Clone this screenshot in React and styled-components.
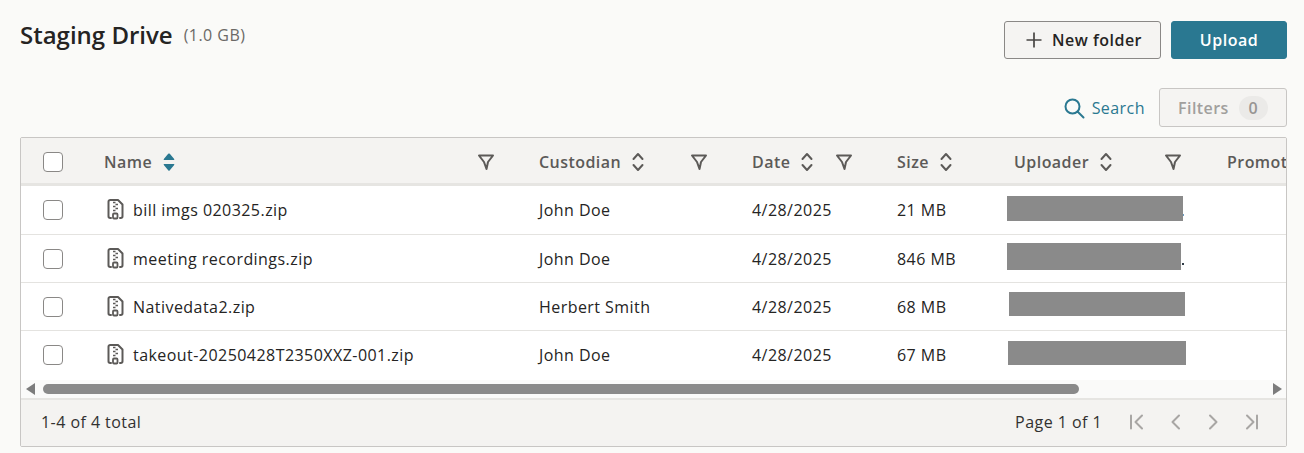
import React from "react";
import styled, { createGlobalStyle } from "styled-components";

const Global = createGlobalStyle`
  html, body { margin: 0; padding: 0; background: #fafaf8; }
  body { font-family: "Open Sans", "Liberation Sans", sans-serif; color: #252423; letter-spacing: 0.45px; }
  * { box-sizing: border-box; }
`;

const Page = styled.div`
  width: 1304px;
  height: 453px;
  padding: 21px 17px 0 20px;
  overflow: hidden;
`;

const TopBar = styled.header`
  display: flex;
  justify-content: space-between;
  align-items: flex-start;
  height: 38px;
`;

const TitleGroup = styled.div`
  display: flex;
  align-items: center;
  gap: 11px;
  margin-top: -3px;
`;

const Title = styled.h1`
  margin: 0;
  font-size: 24px;
  line-height: 34px;
  font-weight: 600;
  letter-spacing: 0;
  color: #252423;
`;

const Subtitle = styled.span`
  font-size: 16px;
  color: #6b6966;
`;

const Actions = styled.div`
  display: flex;
  gap: 10px;
`;

const Button = styled.button`
  height: 38px;
  border-radius: 3px;
  font: 600 16px "Open Sans", sans-serif;
  letter-spacing: 0.5px;
  display: flex;
  align-items: center;
  justify-content: center;
  gap: 9px;
  padding: 0 0 0 ${(p) => p.$pad || 0}px;
  width: ${(p) => p.$width}px;
  color: ${(p) => (p.$primary ? "#fff" : "#252423")};
  background: ${(p) => (p.$primary ? "#2a7891" : "#f5f4f2")};
  border: 1px solid ${(p) => (p.$primary ? "#2a7891" : "#8a8886")};
`;

const ToolRow = styled.div`
  display: flex;
  justify-content: flex-end;
  align-items: center;
  margin-top: 29px;
  height: 39px;
  gap: 14px;
`;

const SearchLink = styled.span`
  display: flex;
  align-items: center;
  gap: 7px;
  font-size: 16px;
  color: #2a7891;
`;

const FilterButton = styled.div`
  width: 128px;
  height: 39px;
  border: 1px solid #c8c6c4;
  border-radius: 3px;
  background: #f5f4f2;
  display: flex;
  align-items: center;
  padding-left: 18px;
  gap: 10px;
  font-size: 16px;
  font-weight: 600;
  color: #a19f9d;
`;

const CountBadge = styled.span`
  min-width: 29px;
  height: 24px;
  border-radius: 12px;
  background: #ebeae8;
  display: flex;
  align-items: center;
  justify-content: center;
  color: #979593;
`;

const TableCard = styled.section`
  margin-top: 10px;
  height: 310px;
  border: 1px solid #c8c6c4;
  border-radius: 2px;
  overflow: hidden;
  background: #fff;
  display: flex;
  flex-direction: column;
`;

const grid = "83px 435px 213px 145px 117px 213px 200px";

const HeaderRow = styled.div`
  display: grid;
  grid-template-columns: ${grid};
  height: 48px;
  flex: none;
  padding-top: 2px;
  background: #f4f3f1;
  border-bottom: 3px solid #e6e5e2;
  overflow: hidden;
`;

const Row = styled.div`
  display: grid;
  grid-template-columns: ${grid};
  height: ${(p) => p.$h}px;
  flex: none;
  align-items: center;
  border-bottom: ${(p) => (p.$last ? "none" : "1px solid #e4e3e0")};
  font-size: 16px;
  color: #252423;
`;

const CheckCell = styled.div`
  display: flex;
  align-items: center;
  padding-left: 22px;
`;

const Checkbox = styled.span`
  display: block;
  width: 20px;
  height: 20px;
  border: 1px solid #8a8886;
  border-radius: 4px;
  background: #fff;
`;

const HeadCell = styled.div`
  display: flex;
  align-items: center;
  font-size: 16px;
  font-weight: 600;
  color: #5c5a58;
  white-space: nowrap;
  min-width: 0;
`;

const SortSlot = styled.span`
  display: flex;
  margin-left: 11px;
`;

const FilterSlot = styled.span`
  display: flex;
  margin-left: auto;
  margin-right: ${(p) => p.$right}px;
`;

const NameCell = styled.div`
  display: flex;
  align-items: center;
  gap: 9px;
  padding-left: 3px;
`;

const Cell = styled.div`
  white-space: nowrap;
`;

const RedactCell = styled.div`
  display: flex;
  align-items: flex-end;
  margin-left: ${(p) => p.$x}px;
  margin-bottom: ${(p) => p.$y}px;
`;

const Redaction = styled.div`
  width: ${(p) => p.$w}px;
  height: ${(p) => p.$h}px;
  background: #8a8a8a;
`;

const Dot = styled.span`
  width: ${(p) => p.$w}px;
  height: 2px;
  margin-left: ${(p) => p.$gap}px;
  margin-bottom: 5px;
  background: ${(p) => p.$color};
`;

const ScrollBar = styled.div`
  height: 20px;
  flex: none;
  background: #fafaf9;
  display: flex;
  align-items: center;
  position: relative;
  margin-top: 1px;
  border-bottom: 2px solid #e6e5e2;
`;

const ScrollThumb = styled.div`
  width: 1036px;
  height: 10px;
  margin-left: 22px;
  border-radius: 5px;
  background: #8a8a8a;
`;

const ArrowLeft = styled.span`
  position: absolute;
  left: 5px;
  top: 3px;
  border-style: solid;
  border-width: 6px 9px 6px 0;
  border-color: transparent #7c7c7c transparent transparent;
`;

const ArrowRight = styled.span`
  position: absolute;
  right: 4px;
  top: 3px;
  border-style: solid;
  border-width: 6px 0 6px 9px;
  border-color: transparent transparent transparent #7c7c7c;
`;

const Footer = styled.footer`
  flex: 1;
  background: #f4f3f1;
  display: flex;
  align-items: center;
  padding: 0 25px 2px 20px;
  font-size: 16px;
  color: #323130;
`;

const PageLabel = styled.span`
  margin-left: auto;
  margin-right: 25px;
`;

const Pager = styled.div`
  display: flex;
  gap: 18px;
  color: #a8a6a4;
`;

const Icon = styled.svg`
  display: block;
  flex: none;
  fill: none;
  stroke: currentColor;
  stroke-linecap: round;
  stroke-linejoin: round;
`;

const Plus = () => (
  <Icon width="18" height="18" viewBox="0 0 18 18" strokeWidth="1.7" style={{ color: "#484644" }}>
    <path d="M9 1.5v15M1.5 9h15" strokeLinecap="butt" />
  </Icon>
);

const SearchIcon = () => (
  <Icon width="22" height="22" viewBox="0 0 22 22" strokeWidth="2">
    <circle cx="9.5" cy="9.5" r="7" />
    <path d="M14.5 14.5l6 6" />
  </Icon>
);

const Funnel = () => (
  <Icon width="18" height="18" viewBox="0 0 18 18" strokeWidth="2" style={{ color: "#5c5a58" }}>
    <path d="M2 2.5h14l-5 6.5-1.5 7L7 9z" />
  </Icon>
);

const Sort = ({ active }) =>
  active ? (
    <svg width="12" height="20" viewBox="0 0 12 20" fill="#2a7891" style={{ display: "block" }}>
      <path d="M6 1.5a1 1 0 0 1 .8.3l4.4 5.2c.3.4 0 1-.5 1H1.3c-.5 0-.8-.6-.5-1l4.4-5.2a1 1 0 0 1 .8-.3zM1.3 12h9.4c.5 0 .8.6.5 1l-4.4 5.2a1 1 0 0 1-1.6 0L.8 13c-.3-.4 0-1 .5-1z" />
    </svg>
  ) : (
    <Icon width="12" height="20" viewBox="0 0 12 20" strokeWidth="2" style={{ color: "#5c5a58" }}>
      <path d="M1.5 7L6 2l4.5 5M1.5 13L6 18l4.5-5" />
    </Icon>
  );

const ZipFile = () => (
  <Icon width="17" height="22" viewBox="0 0 17 22" strokeWidth="2" style={{ color: "#5c5a58" }}>
    <path d="M6 1H3.2A1.7 1.7 0 0 0 1.5 2.7v14.6A1.7 1.7 0 0 0 3.2 19H4" />
    <path d="M6 1h5l4.5 4.5v11.8a1.7 1.7 0 0 1-1.7 1.7H13" />
    <path d="M6 3.5h2.5M8.5 5.5h2.5M6 7.5h2.5M8.5 9.5h2.5M6 11.5h2.5" strokeLinecap="butt" strokeWidth="1.6" />
    <rect x="6" y="14.5" width="4.5" height="5" rx="1" strokeWidth="1.8" />
  </Icon>
);

const Chevron = ({ d }) => (
  <Icon width="20" height="20" viewBox="0 0 20 20" strokeWidth="2" strokeLinecap="butt">
    <path d={d} />
  </Icon>
);

const rows = [
  { name: "bill imgs 020325.zip", who: "John Doe", size: "21 MB", h: 49, r: { x: -7, y: 3, w: 176, hh: 25 }, dot: { w: 1, gap: 0, color: "#6d9cc0" } },
  { name: "meeting recordings.zip", who: "John Doe", size: "846 MB", h: 48, r: { x: -7, y: 4, w: 174, hh: 27 }, dot: { w: 2, gap: 1, color: "#2f3b46" } },
  { name: "Nativedata2.zip", who: "Herbert Smith", size: "68 MB", h: 48, r: { x: -5, y: 5, w: 176, hh: 24 } },
  { name: "takeout-20250428T2350XXZ-001.zip", who: "John Doe", size: "67 MB", h: 48, r: { x: -6, y: 4, w: 178, hh: 24 }, last: true },
];

export default function App() {
  return (
    <Page>
      <Global />
      <TopBar>
        <TitleGroup>
          <Title>Staging Drive</Title>
          <Subtitle>(1.0 GB)</Subtitle>
        </TitleGroup>
        <Actions>
          <Button $width={157} $pad={2}><Plus />New folder</Button>
          <Button $primary $width={116}>Upload</Button>
        </Actions>
      </TopBar>
      <ToolRow>
        <SearchLink><SearchIcon />Search</SearchLink>
        <FilterButton>Filters<CountBadge>0</CountBadge></FilterButton>
      </ToolRow>
      <TableCard>
        <HeaderRow>
          <CheckCell><Checkbox /></CheckCell>
          <HeadCell>Name<SortSlot><Sort active /></SortSlot><FilterSlot $right={44}><Funnel /></FilterSlot></HeadCell>
          <HeadCell>Custodian<SortSlot><Sort /></SortSlot><FilterSlot $right={44}><Funnel /></FilterSlot></HeadCell>
          <HeadCell>Date<SortSlot><Sort /></SortSlot><FilterSlot $right={44}><Funnel /></FilterSlot></HeadCell>
          <HeadCell>Size<SortSlot><Sort /></SortSlot></HeadCell>
          <HeadCell>Uploader<SortSlot><Sort /></SortSlot><FilterSlot $right={45}><Funnel /></FilterSlot></HeadCell>
          <HeadCell>Promoted</HeadCell>
        </HeaderRow>
        {rows.map((r) => (
          <Row key={r.name} $h={r.h} $last={r.last}>
            <CheckCell><Checkbox /></CheckCell>
            <NameCell><ZipFile />{r.name}</NameCell>
            <Cell>{r.who}</Cell>
            <Cell>4/28/2025</Cell>
            <Cell>{r.size}</Cell>
            <RedactCell $x={r.r.x} $y={r.r.y}>
              <Redaction $w={r.r.w} $h={r.r.hh} />
              {r.dot && <Dot $w={r.dot.w} $gap={r.dot.gap} $color={r.dot.color} />}
            </RedactCell>
            <Cell />
          </Row>
        ))}
        <ScrollBar>
          <ArrowLeft />
          <ScrollThumb />
          <ArrowRight />
        </ScrollBar>
        <Footer>
          1-4 of 4 total
          <PageLabel>Page 1 of 1</PageLabel>
          <Pager>
            <Chevron d="M4 3.5v13M15 3.5L8.5 10l6.5 6.5" />
            <Chevron d="M14 3.5L7.5 10l6.5 6.5" />
            <Chevron d="M7 3.5l6.5 6.5L7 16.5" />
            <Chevron d="M16 3.5v13M6 3.5l6.5 6.5L6 16.5" />
          </Pager>
        </Footer>
      </TableCard>
    </Page>
  );
}
